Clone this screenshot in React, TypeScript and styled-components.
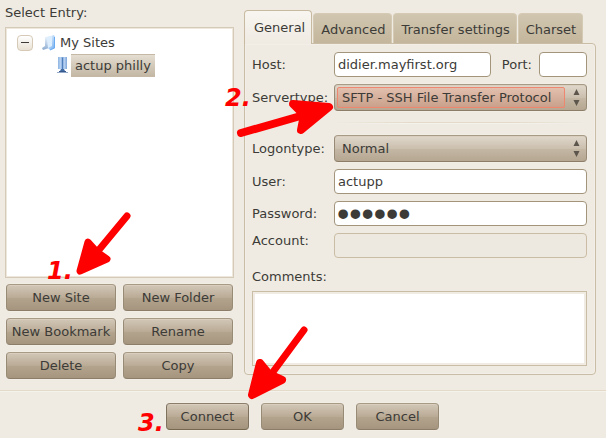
import React from "react";
import styled, { createGlobalStyle, css } from "styled-components";

const GlobalStyle = createGlobalStyle`
  * { box-sizing: border-box; }
  body {
    margin: 0;
    background: #efebe3;
    color: #3c3b37;
    font: 13px/16px "DejaVu Sans", sans-serif;
  }
  button, input, select, textarea { font: inherit; color: inherit; margin: 0; }
`;

const buttonFace = css`
  border: 1px solid;
  border-color: #a89b86 #988b76 #8b7d68;
  border-radius: 4px;
  box-shadow: inset 0 1px 0 #dacfbf, 0 0 0 1px #f2eee6;
`;

const Dialog = styled.main`
  min-height: 100vh;
  display: flex;
  flex-direction: column;
  overflow: hidden;
`;

const Columns = styled.div`
  display: grid;
  grid-template-columns: 229fr 352fr;
  gap: 10px;
  padding: 5px 10px 11px 5px;
`;

const Sites = styled.section`
  display: flex;
  flex-direction: column;
  min-width: 0;
`;

const Heading = styled.h2`
  margin: 0 0 6px;
  font: inherit;
`;

const Tree = styled.ul`
  list-style: none;
  margin: 0 0 6px;
  padding: 3px 9px;
  flex: 1;
  min-height: 251px;
  background: #fff;
  border: 1px solid #d5c9b8;
  box-shadow: inset 0 0 0 1px #eee7dc;
`;

const Branch = styled.ul`
  list-style: none;
  margin: 0;
  padding: 0 0 0 42px;
`;

const TreeRow = styled.div`
  display: flex;
  align-items: center;
  height: 23px;
`;

const Expander = styled.button`
  width: 16px;
  height: 16px;
  margin: 0 9px 0 2px;
  padding: 0;
  display: grid;
  place-items: center;
  background: linear-gradient(#fff, #e9e2d5);
  border: 1px solid #d6cab6;
  border-radius: 4px;
`;

const TreeLabel = styled.span<{ $selected?: boolean }>`
  padding: 0 4px;
  line-height: 23px;
  ${(p) =>
    p.$selected &&
    css`
      margin-left: 3px;
      line-height: 21px;
      border: 1px solid #c5b9a5;
      border-width: 1px 0;
      background: linear-gradient(#e4ddd1, #c3b7a4);
    `}
`;

const SiteActions = styled.div`
  display: grid;
  grid-template-columns: 1fr 1fr;
  gap: 7px;
  padding: 0 1px;
`;

const Target = styled.div`
  position: relative;
  display: grid;
  min-width: 0;
`;

const PushButton = styled.button<{ $primary?: boolean }>`
  ${buttonFace}
  height: 27px;
  min-width: 83px;
  padding: 0 4px;
  white-space: nowrap;
  background: linear-gradient(#d2c7b7, #baab96 50%, #b3a48e 52%, #a6957e);
  ${(p) => p.$primary && "border-color: #8b7f6c #7e715e #75684f;"}
`;

const Settings = styled.section`
  display: flex;
  flex-direction: column;
  min-width: 0;
  padding: 5px 0 4px;
`;

const TabList = styled.div`
  display: flex;
  align-items: flex-end;
  gap: 1px;
`;

const Tab = styled.button<{ $active?: boolean }>`
  height: 30px;
  padding: 2px 6px 0 7px;
  white-space: nowrap;
  border: 1px solid #d5cab4;
  border-bottom: 0;
  border-radius: 4px 4px 0 0;
  background: linear-gradient(#d1c6b0, #c3b69c);
  ${(p) =>
    p.$active &&
    css`
      position: relative;
      height: 34px;
      margin-bottom: -1px;
      padding: 0 6px 0 9px;
      border-color: #c8baa0;
      background: linear-gradient(#f8f5f0, #efebe3);
    `}
`;

const TabPanel = styled.div`
  flex: 1;
  display: flex;
  flex-direction: column;
  padding: 8px 8px 8px 7px;
  border: 1px solid #cabda5;
  border-radius: 0 4px 4px 4px;
  box-shadow: inset 0 0 0 1px #f3efe8;
`;

const Fields = styled.div`
  display: flex;
  flex-direction: column;
  gap: 7px;
`;

const Field = styled.div`
  display: grid;
  grid-template-columns: 82px minmax(0, 1fr);
  align-items: center;
`;

const FieldLabel = styled.label<{ $top?: boolean }>`
  ${(p) => p.$top && "align-self: start;"}
`;

const HostInputs = styled.div`
  display: grid;
  grid-template-columns: minmax(0, 1fr) auto 48px;
  align-items: center;
`;

const PortLabel = styled.label`
  padding: 0 7px 0 11px;
`;

const TextInput = styled.input`
  width: 100%;
  min-width: 0;
  height: 25px;
  padding: 0 3px;
  background: #fff;
  border: 1px solid #a3957b;
  border-radius: 4px;
  outline: 0;
  &:disabled {
    background: #eee9e0;
    border-color: #cbbca5;
  }
  &[type="password"] {
    padding: 0 2px;
    font-family: "Liberation Sans", sans-serif;
    font-size: 35px;
    line-height: 23px;
  }
`;

const SelectShell = styled.div`
  ${buttonFace}
  display: flex;
  align-items: center;
  height: 27px;
  padding: 2px 6px 2px 2px;
  background: linear-gradient(#e0d8cc, #cbbfae 50%, #c4b7a4 52%, #b5a791);
`;

const Select = styled.select<{ $current?: boolean }>`
  appearance: none;
  flex: 1;
  min-width: 0;
  height: 21px;
  margin-right: 8px;
  padding: 0 4px;
  border: 1px solid transparent;
  border-radius: 2px;
  background: transparent;
  outline: 0;
  ${(p) =>
    p.$current &&
    css`
      border-color: #ee8670;
      background: linear-gradient(#e2bfae, #c9a18b);
    `}
`;

const Divider = styled.hr<{ $inset?: boolean }>`
  width: 100%;
  height: 2px;
  margin: 0;
  border: 0;
  background: linear-gradient(#e3dac9 50%, #f5f2ec 50%);
  ${(p) =>
    p.$inset &&
    css`
      width: auto;
      margin: 4px 0 4px 82px;
      mask-image: linear-gradient(90deg, transparent, #000 30%, #000 70%, transparent);
    `}
`;

const CommentsLabel = styled.label`
  margin: 11px 0 6px;
`;

const Comments = styled.textarea`
  width: 100%;
  height: 75px;
  padding: 3px;
  resize: none;
  background: #fff;
  border: 1px solid #cabda5;
  box-shadow: inset 0 0 0 2px #f0ece4;
  outline: 0;
`;

const Footer = styled.footer`
  display: flex;
  justify-content: center;
  gap: 12px;
  padding: 11px 1px 8px 0;
`;

const Mark = styled.svg<{ $x: number; $y: number }>`
  position: absolute;
  left: ${(p) => p.$x}px;
  top: ${(p) => p.$y}px;
  z-index: 1;
  overflow: visible;
  pointer-events: none;
  fill: #f00;
  stroke: #f00;
  stroke-linejoin: round;
  stroke-linecap: round;
`;

const MarkText = styled.text`
  stroke: none;
  font: italic bold 24px/24px "DejaVu Sans", sans-serif;
`;

function FolderIcon() {
  return (
    <svg width="14" height="16" viewBox="0 0 14 16" aria-hidden="true">
      <defs>
        <linearGradient id="folderFront" x2="1" y2="1">
          <stop stopColor="#fff" />
          <stop offset="1" stopColor="#6aaaf0" />
        </linearGradient>
        <linearGradient id="folderBack" x2="0" y2="1">
          <stop stopColor="#f2f9ff" />
          <stop offset="1" stopColor="#8cabd0" />
        </linearGradient>
      </defs>
      <path d="M3 2 7 1V13L1 15 0 13 3 11z" fill="url(#folderBack)" />
      <path d="M5 2 12 0 13 2V13L8 15 6 13z" fill="url(#folderFront)" />
      <path d="M5 2 10 1V11L6 13z" fill="#dceefe" />
      <path d="M12.5 2v11L8 15" fill="none" stroke="#6aaaf0" strokeWidth="1" />
    </svg>
  );
}

function ServerIcon() {
  return (
    <svg width="11" height="17" viewBox="0 0 11 17" aria-hidden="true">
      <defs>
        <linearGradient id="tower">
          <stop stopColor="#8fb4e2" />
          <stop offset="0.3" stopColor="#b9d3f2" />
          <stop offset="0.5" stopColor="#6f9cd4" />
          <stop offset="0.7" stopColor="#b8d2f2" />
          <stop offset="1" stopColor="#7fa5d8" />
        </linearGradient>
      </defs>
      <path d="M1 0h9v12H1z" fill="url(#tower)" />
      <path d="M5.5 1v13" stroke="#4f7dba" />
      <path d="M4 12h3l1 2H3z" fill="#426aa3" />
      <path d="M0 15.5h11" stroke="#93a9c9" />
      <path d="M2 14.5h7" stroke="#36588c" />
    </svg>
  );
}

function UpDown() {
  return (
    <svg width="7" height="17" viewBox="0 0 7 17" aria-hidden="true">
      <path d="M3.5 0 6.5 6H.5zM.5 11h6l-3 6z" fill="#5c564c" />
    </svg>
  );
}

export default function App() {
  return (
    <Dialog>
      <GlobalStyle />
      <Columns>
        <Sites>
          <Heading>Select Entry:</Heading>
          <Tree>
            <li>
              <TreeRow>
                <Expander aria-label="Collapse My Sites">
                  <svg width="8" height="2" aria-hidden="true">
                    <path d="M0 .5h8" stroke="#3c3b37" />
                  </svg>
                </Expander>
                <FolderIcon />
                <TreeLabel>My Sites</TreeLabel>
              </TreeRow>
              <Branch>
                <li>
                  <TreeRow>
                    <ServerIcon />
                    <TreeLabel $selected>actup philly</TreeLabel>
                  </TreeRow>
                </li>
              </Branch>
            </li>
          </Tree>
          <SiteActions>
            <Target>
              <PushButton>New Site</PushButton>
              <Mark $x={40} $y={-74} width="90" height="74" aria-hidden="true">
                <path d="M81 6 52 41" strokeWidth="7" />
                <path d="M34 61 42 32 51 42 61 49z" strokeWidth="7" />
                <MarkText x="1" y="69">1.</MarkText>
              </Mark>
            </Target>
            <PushButton>New Folder</PushButton>
            <PushButton>New Bookmark</PushButton>
            <PushButton>Rename</PushButton>
            <PushButton>Delete</PushButton>
            <PushButton>Copy</PushButton>
          </SiteActions>
        </Sites>

        <Settings>
          <TabList role="tablist">
            <Tab role="tab" aria-selected="true" $active>General</Tab>
            <Tab role="tab" aria-selected="false">Advanced</Tab>
            <Tab role="tab" aria-selected="false">Transfer settings</Tab>
            <Tab role="tab" aria-selected="false">Charset</Tab>
          </TabList>
          <TabPanel role="tabpanel">
            <Fields>
              <Field>
                <FieldLabel htmlFor="host">Host:</FieldLabel>
                <HostInputs>
                  <TextInput id="host" defaultValue="didier.mayfirst.org" />
                  <PortLabel htmlFor="port">Port:</PortLabel>
                  <TextInput id="port" />
                </HostInputs>
              </Field>
              <Field>
                <FieldLabel htmlFor="servertype">Servertype:</FieldLabel>
                <Target>
                  <SelectShell>
                    <Select id="servertype" $current>
                      <option>SFTP - SSH File Transfer Protocol</option>
                    </Select>
                    <UpDown />
                  </SelectShell>
                  <Mark $x={-112} $y={0} width="120" height="60" aria-hidden="true">
                    <path d="M19 49 82 31" strokeWidth="8" />
                    <path d="M107 23 71 20 82 31 79 46z" strokeWidth="8" />
                    <MarkText x="3" y="22">2.</MarkText>
                  </Mark>
                </Target>
              </Field>
              <Divider $inset />
              <Field>
                <FieldLabel htmlFor="logontype">Logontype:</FieldLabel>
                <SelectShell>
                  <Select id="logontype">
                    <option>Normal</option>
                  </Select>
                  <UpDown />
                </SelectShell>
              </Field>
              <Field>
                <FieldLabel htmlFor="user">User:</FieldLabel>
                <TextInput id="user" defaultValue="actupp" />
              </Field>
              <Field>
                <FieldLabel htmlFor="password">Password:</FieldLabel>
                <TextInput id="password" type="password" defaultValue="secret" />
              </Field>
              <Field>
                <FieldLabel htmlFor="account" $top>Account:</FieldLabel>
                <TextInput id="account" disabled />
              </Field>
            </Fields>
            <CommentsLabel htmlFor="comments">Comments:</CommentsLabel>
            <Comments id="comments" />
          </TabPanel>
        </Settings>
      </Columns>
      <Divider />
      <Footer>
        <Target>
          <PushButton $primary>Connect</PushButton>
          <Mark $x={-32} $y={-83} width="180" height="84" aria-hidden="true">
            <path d="M170 10 133 60" strokeWidth="7" />
            <path d="M118 75 126 43 135 54 148 60z" strokeWidth="8" />
            <MarkText x="4" y="111">3.</MarkText>
          </Mark>
        </Target>
        <PushButton>OK</PushButton>
        <PushButton>Cancel</PushButton>
      </Footer>
    </Dialog>
  );
}
